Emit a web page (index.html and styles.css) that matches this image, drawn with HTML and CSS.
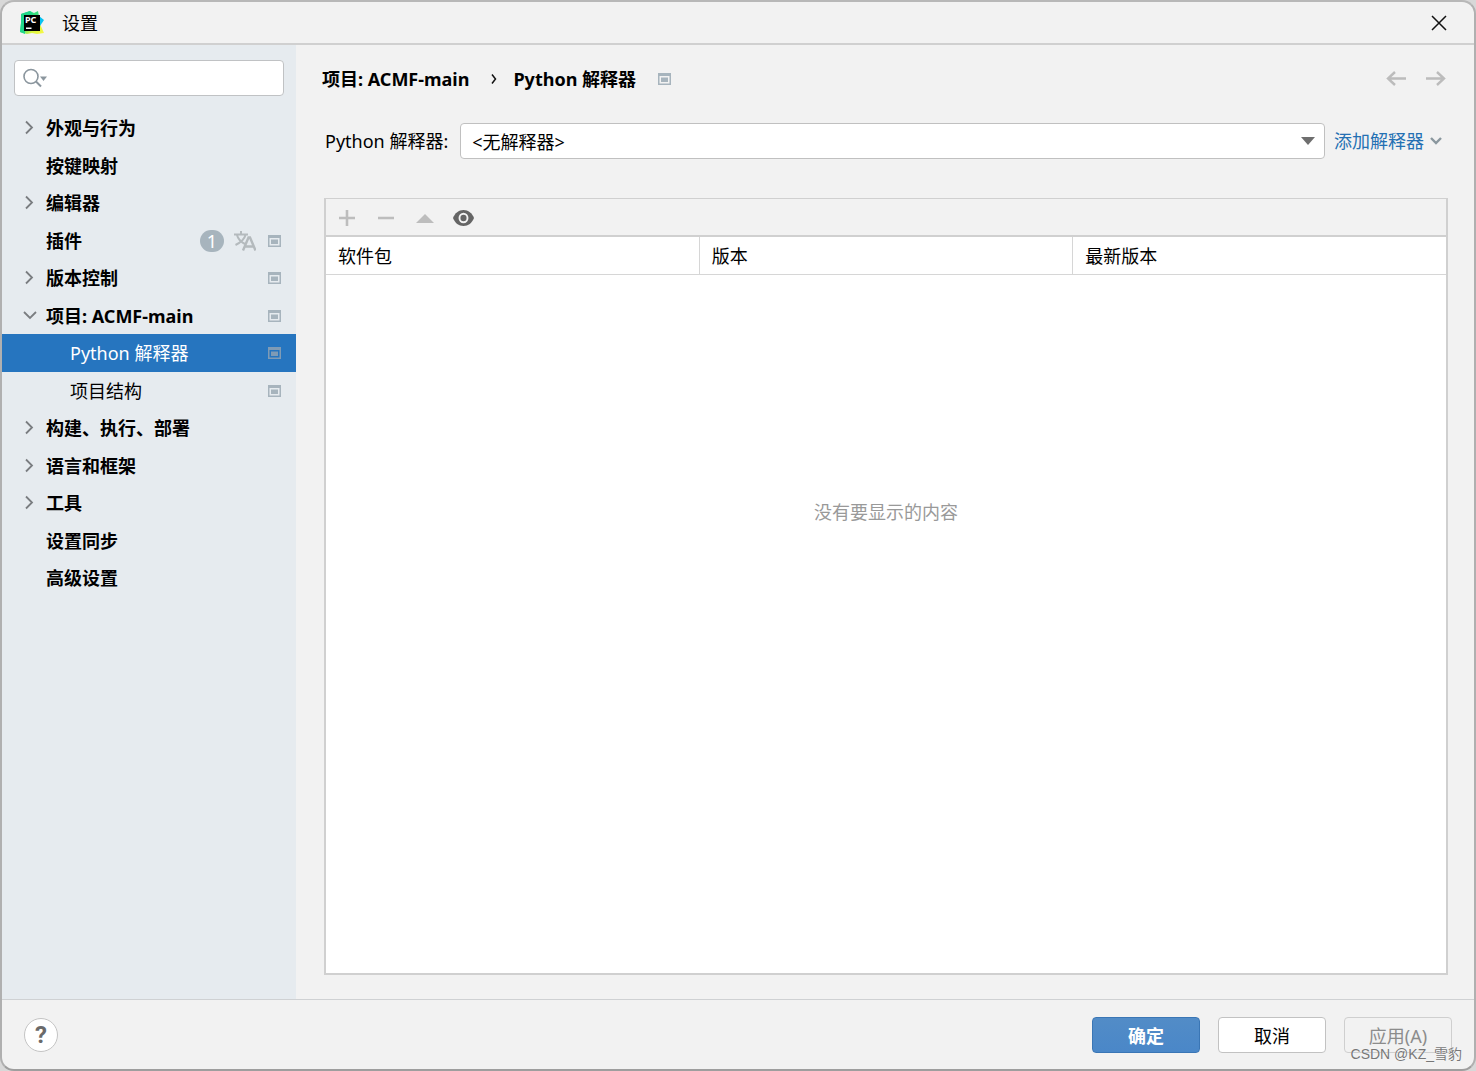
FILE: index.html
```html
<!DOCTYPE html>
<html lang="zh-CN">
<head>
<meta charset="utf-8">
<title>设置</title>
<link rel="stylesheet" href="styles.css">
</head>
<body>
<svg class="defs" aria-hidden="true">
  <symbol id="right" viewBox="0 0 14 16"><path d="M3 1.500l6 6-6 6" fill="none" stroke="#7a7d80" stroke-width="1.800"/></symbol>
  <symbol id="down" viewBox="0 0 14 16"><path d="M1 4l6 6 6-6" fill="none" stroke="#7a7d80" stroke-width="1.800"/></symbol>
  <symbol id="scope" viewBox="0 0 13 12"><path d="M0 0h13v12H0zM1.500 3v7.500h10V3z" fill="currentColor" fill-rule="evenodd"/><path d="M3 4.500h7v4.500H3z" fill="currentColor"/></symbol>
</svg>
<div class="window">
  <header class="titlebar">
    <svg class="logo" viewBox="0 0 24 24">
      <defs><linearGradient id="lg" x1="0" y1="0" x2="1" y2="1"><stop offset="0" stop-color="#21d789"/><stop offset=".45" stop-color="#3fe07a"/><stop offset=".7" stop-color="#d9f53c"/><stop offset="1" stop-color="#fcf84a"/></linearGradient></defs>
      <path d="M1 3l9-3 4 2 4-2 1 5 1 8 4 9-7 1-5-1-5 1-7-2 1-9z" fill="url(#lg)"/>
      <path d="M1 3l9-3 3 3-8 3v17l-5-2 1-9z" fill="#21d789"/>
      <path d="M19 5l5 4-4 6h-2z" fill="#07c3f2"/>
      <path d="M4 4h16v16H4z" fill="#000"/>
      <path d="M6 16.500h5.500v1.500H6z" fill="#fff"/>
      <text x="5" y="12" class="logo-text">PC</text>
    </svg>
    <h1>设置</h1>
    <button class="icon-btn" aria-label="关闭"><svg width="16" height="16"><path d="M1 1l14 14M15 1L1 15" stroke="#111" stroke-width="1.500"/></svg></button>
  </header>
  <div class="body">
    <aside class="sidebar">
      <label class="search">
        <svg width="26" height="20"><circle cx="8" cy="8.500" r="7" fill="none" stroke="#8b969e" stroke-width="1.600"/><path d="M13 13.500l5 5" stroke="#8b969e" stroke-width="2"/><path d="M17 8.500h7L20.500 13z" fill="#8b969e"/></svg>
        <input type="text" aria-label="搜索">
      </label>
      <nav>
        <ul class="tree">
          <li><svg class="arrow"><use href="#right"/></svg><a href="#">外观与行为</a></li>
          <li><span class="arrow"></span><a href="#">按键映射</a></li>
          <li><svg class="arrow"><use href="#right"/></svg><a href="#">编辑器</a></li>
          <li><span class="arrow"></span><a href="#">插件</a><span class="count">1</span>
            <svg class="lang" viewBox="0 0 22 20"><path d="M0 3.500h14M7 0v3M3 4c1 4 4 7 8 9M11.500 4c-1 4-4 7-10 10" fill="none" stroke="#b4babd" stroke-width="2"/><path d="M9 19.500l5.500-13h1.500l5.500 13M11 15.500h9" fill="none" stroke="#b4babd" stroke-width="2.400"/></svg>
            <svg class="scope"><use href="#scope"/></svg></li>
          <li><svg class="arrow"><use href="#right"/></svg><a href="#">版本控制</a><svg class="scope"><use href="#scope"/></svg></li>
          <li><svg class="arrow"><use href="#down"/></svg><a href="#">项目: ACMF-main</a><svg class="scope"><use href="#scope"/></svg></li>
          <li class="child selected"><a href="#" aria-current="page">Python 解释器</a><svg class="scope"><use href="#scope"/></svg></li>
          <li class="child"><a href="#">项目结构</a><svg class="scope"><use href="#scope"/></svg></li>
          <li><svg class="arrow"><use href="#right"/></svg><a href="#">构建、执行、部署</a></li>
          <li><svg class="arrow"><use href="#right"/></svg><a href="#">语言和框架</a></li>
          <li><svg class="arrow"><use href="#right"/></svg><a href="#">工具</a></li>
          <li><span class="arrow"></span><a href="#">设置同步</a></li>
          <li><span class="arrow"></span><a href="#">高级设置</a></li>
        </ul>
      </nav>
    </aside>
    <main class="content">
      <div class="crumbs">
        <a href="#">项目: ACMF-main</a>
        <svg width="6" height="12"><path d="M1 1.500L4.500 6 1 10.500" fill="none" stroke="#111" stroke-width="1.500"/></svg>
        <h2>Python 解释器</h2>
        <svg class="scope"><use href="#scope"/></svg>
        <div class="history">
          <button class="icon-btn" aria-label="后退"><svg width="20" height="16"><path d="M9 1L2 7.500 9 14M2 7.500h18" fill="none" stroke="#bcbcbc" stroke-width="2.400"/></svg></button>
          <button class="icon-btn" aria-label="前进"><svg width="20" height="16"><path d="M11 1l7 6.500-7 6.500M18 7.500H0" fill="none" stroke="#bcbcbc" stroke-width="2.400"/></svg></button>
        </div>
      </div>
      <div class="interpreter">
        <label for="interp">Python 解释器:</label>
        <div class="select">
          <select id="interp"><option>&lt;无解释器&gt;</option></select>
          <svg width="14" height="8"><path d="M0 0h14L7 8z" fill="#6e6e6e"/></svg>
        </div>
        <a href="#" class="add">添加解释器<svg width="12" height="8"><path d="M1 1l5 5 5-5" fill="none" stroke="#8a979e" stroke-width="2.400"/></svg></a>
      </div>
      <section class="packages">
        <div class="toolbar">
          <button class="icon-btn" aria-label="添加"><svg width="16" height="16"><path d="M8 0v16M0 8h16" stroke="#bdbdbd" stroke-width="2.600"/></svg></button>
          <button class="icon-btn" aria-label="移除"><svg width="16" height="16"><path d="M0 8h16" stroke="#bdbdbd" stroke-width="2.600"/></svg></button>
          <button class="icon-btn" aria-label="升级"><svg width="18" height="16"><path d="M0 13h18L9 4z" fill="#bdbdbd"/></svg></button>
          <button class="icon-btn" aria-label="显示早期版本"><svg width="21" height="16" viewBox="0 0 22 16" preserveAspectRatio="none"><path d="M11 0C6 0 2 3 0 8c2 5 6 8 11 8s9-3 11-8c-2-5-6-8-11-8z" fill="#656565"/><circle cx="11" cy="8" r="4.200" fill="none" stroke="#f2f2f2" stroke-width="2"/></svg></button>
        </div>
        <table>
          <thead><tr><th>软件包</th><th>版本</th><th>最新版本</th></tr></thead>
        </table>
        <p class="empty">没有要显示的内容</p>
      </section>
    </main>
  </div>
  <footer class="footer">
    <button class="help" aria-label="帮助">?</button>
    <div class="actions">
      <button class="btn primary">确定</button>
      <button class="btn">取消</button>
      <button class="btn" disabled>应用(A)</button>
    </div>
  </footer>
</div>
<div class="watermark">CSDN @KZ_雪豹</div>
</body>
</html>
```
FILE: styles.css
```css
* { box-sizing: border-box; }
body {
  margin: 0;
  background: #d8d8d8;
  color: #000;
  font: 18px/24px "Noto Sans", "Noto Sans CJK SC", sans-serif;
}
button, input, select { font: inherit; color: inherit; }
a { color: inherit; text-decoration: none; }
svg { display: block; flex: none; }
.defs { position: absolute; width: 0; height: 0; }

.window {
  display: flex;
  flex-direction: column;
  min-height: 100vh;
  border: 2px solid #b0b0b0;
  border-top-color: #b8b8b8;
  border-bottom-color: #9e9e9e;
  border-radius: 14px;
  background: #f2f2f2;
  overflow: hidden;
}
.icon-btn {
  display: flex;
  justify-content: center;
  padding: 0;
  border: 0;
  background: none;
}

.titlebar {
  display: flex;
  align-items: center;
  height: 43px;
  padding: 0 27px 0 18px;
  border-bottom: 2px solid #d0d0d0;
}
.logo { width: 24px; height: 24px; }
.logo-text { font: 700 9px "Noto Sans", sans-serif; fill: #fff; }
h1 { margin: 0 auto 0 18px; font-size: 18px; font-weight: 400; }

.body { display: flex; flex: 1; }
.sidebar { flex: none; width: 294px; padding: 15px 0; background: #e6ebef; }
.search {
  display: flex;
  align-items: center;
  height: 36px;
  margin: 0 12px 13px;
  padding: 0 8px;
  border: 1px solid #c0c2c4;
  border-radius: 4px;
  background: #fff;
}
.search input { flex: 1; min-width: 0; border: 0; outline: 0; background: none; }

.tree { margin: 0; padding: 0; list-style: none; font-weight: 700; }
.tree li {
  display: flex;
  align-items: center;
  height: 38px;
  padding: 0 15px 0 21px;
}
.tree li:nth-child(even) { height: 37px; }
.tree a { margin-right: auto; }
.arrow { width: 14px; height: 16px; margin-right: 9px; }
.scope { width: 13px; height: 12px; color: #a7b4bd; }
.tree .child { padding-left: 68px; font-weight: 400; }
.tree .selected { background: #2675bf; color: #fff; }
.selected .scope { color: #7f9bb5; }
.count {
  width: 24px;
  height: 22px;
  border-radius: 11px;
  background: #a7b4bd;
  color: #fff;
  font-weight: 400;
  line-height: 22px;
  text-align: center;
}
.lang { width: 22px; height: 20px; margin: 0 12px 0 10px; }

.content {
  display: flex;
  flex: 1;
  flex-direction: column;
  min-width: 0;
  padding: 22px 26px 24px 28px;
}
.crumbs { display: flex; align-items: center; margin-left: -2px; font-weight: 700; }
.crumbs > svg { margin: 0 16px 0 22px; }
.crumbs h2 { margin: 0; font-size: 18px; }
.crumbs > .scope { margin: 0 0 0 22px; }
.history { display: flex; gap: 20px; margin: 0 2px 0 auto; }

.interpreter { display: flex; align-items: center; margin: 32px 0 39px; padding-left: 1px; }
.select { position: relative; flex: 1; margin: 0 9px 0 12px; }
.select select {
  display: block;
  width: 100%;
  height: 36px;
  padding: 2px 11px 0;
  border: 1px solid #c0c0c0;
  border-radius: 4px;
  background: #fff;
  appearance: none;
}
.select svg { position: absolute; top: 14px; right: 10px; pointer-events: none; }
.add { display: flex; align-items: center; gap: 6px; margin-right: 6px; color: #2470b3; }

.packages {
  display: flex;
  flex: 1;
  flex-direction: column;
  border: 2px solid #d0d0d0;
  border-top-width: 1px;
  background: #fff;
}
.toolbar {
  display: flex;
  align-items: center;
  height: 38px;
  padding: 2px 1px 0;
  border-bottom: 2px solid #d0d0d0;
  background: #f2f2f2;
}
.toolbar .icon-btn { width: 39px; }
table { width: 100%; border-collapse: collapse; table-layout: fixed; }
th {
  height: 37px;
  padding: 2px 12px 0;
  border-bottom: 1px solid #d6d6d6;
  font-weight: 400;
  text-align: left;
}
th + th { border-left: 1px solid #d6d6d6; }
.empty { margin: 225px 0 auto; color: #999; text-align: center; }

.footer {
  display: flex;
  align-items: center;
  justify-content: space-between;
  height: 70px;
  padding: 0 22px;
  border-top: 1px solid #cfd1d3;
}
.help {
  width: 34px;
  height: 34px;
  padding: 0;
  border: 1px solid #c4c4c4;
  border-radius: 50%;
  background: #fff;
  color: #6a6a6a;
  font: 700 24px/32px Roboto, sans-serif;
}
.actions { display: flex; gap: 18px; }
.btn {
  width: 108px;
  height: 36px;
  padding: 2px 0 0;
  border: 1px solid #c2c2c2;
  border-radius: 4px;
  background: #fff;
}
.btn.primary {
  border-color: #3a76b5;
  background: linear-gradient(#528cc7, #4a87c8);
  color: #fff;
  font-weight: 700;
}
.btn:disabled { border-color: #cfcfcf; background: none; color: #8c8c8c; }
.watermark {
  position: absolute;
  right: 14px;
  bottom: 7px;
  color: #777;
  font: 14px/20px "Liberation Sans", "Noto Sans CJK SC", sans-serif;
  text-shadow: 0 0 1px #fff;
}
```
